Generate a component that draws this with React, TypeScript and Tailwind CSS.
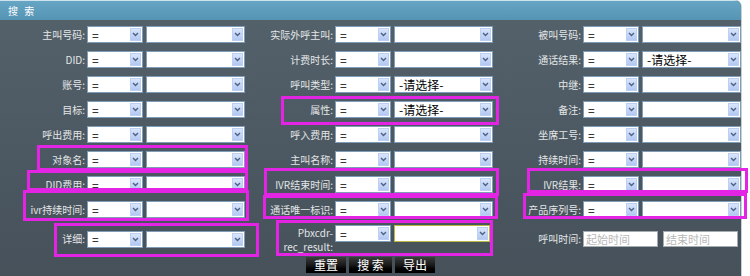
import React from "react";

const FONT = { fontFamily: '"Noto Sans CJK SC", "Liberation Sans", sans-serif' };

type Field = { label: string; value?: string; yellow?: boolean };

const rows: Field[][] = [
  [{ label: "主叫号码:" }, { label: "实际外呼主叫:" }, { label: "被叫号码:" }],
  [{ label: "DID:" }, { label: "计费时长:" }, { label: "通话结果:", value: "-请选择-" }],
  [{ label: "账号:" }, { label: "呼叫类型:", value: "-请选择-" }, { label: "中继:" }],
  [{ label: "目标:" }, { label: "属性:", value: "-请选择-" }, { label: "备注:" }],
  [{ label: "呼出费用:" }, { label: "呼入费用:" }, { label: "坐席工号:" }],
  [{ label: "对象名:" }, { label: "主叫名称:" }, { label: "持续时间:" }],
  [{ label: "DID费用:" }, { label: "IVR结束时间:" }, { label: "IVR结果:" }],
  [{ label: "ivr持续时间:" }, { label: "通话唯一标识:" }, { label: "产品序列号:" }],
];

// magenta annotation boxes drawn over the form
const marks = [
  { x: 281, y: 96, w: 218, h: 29 },
  { x: 37, y: 145, w: 211, h: 26 },
  { x: 27, y: 170, w: 221, h: 21 },
  { x: 23, y: 190, w: 226, h: 31 },
  { x: 54, y: 223, w: 205, h: 34 },
  { x: 264, y: 168, w: 235, h: 28 },
  { x: 263, y: 195, w: 235, h: 24 },
  { x: 276, y: 220, w: 217, h: 36 },
  { x: 527, y: 168, w: 221, h: 25 },
  { x: 523, y: 193, w: 224, h: 26 },
];

function Arrow() {
  return (
    <span className="absolute right-[1px] top-[1px] bottom-[1px] w-[11px] flex items-center justify-center bg-gradient-to-b from-[#d9e5fb] to-[#b3c8f2] border border-[#bccff5]">
      <svg width="7" height="5" viewBox="0 0 7 5">
        <polyline points="1,1 3.5,3.5 6,1" fill="none" stroke="#4d6185" strokeWidth="1.4" />
      </svg>
    </span>
  );
}

function Select({ w, text, yellow }: { w: string; text?: string; yellow?: boolean }) {
  return (
    <div
      className={`relative h-[17px] bg-white border ${yellow ? "border-[#b8b840]" : "border-[#7f9db9]"} ${w} flex items-center pl-[4px] text-[12px] text-black leading-none`}
    >
      {text}
      <Arrow />
    </div>
  );
}

function Cell({ f }: { f: Field }) {
  return (
    <div className="flex items-center">
      <div className="w-[87px] pr-[2px] text-right text-[10px] text-[#e4e6e8] leading-none">{f.label}</div>
      <Select w="w-[56px]" text="=" />
      <div className="w-[3px]" />
      <Select w="w-[99px]" text={f.value} yellow={f.yellow} />
    </div>
  );
}

export default function App() {
  return (
    <div className="relative w-[750px] h-[276px] bg-white overflow-hidden" style={FONT}>
      <div className="w-[742px] h-full flex flex-col rounded-tr-[7px] overflow-hidden border-r border-[#c5d0d8] bg-gradient-to-b from-[#54626b] to-[#46515a]">
        {/* header */}
        <div className="h-[20px] shrink-0 flex items-center pl-[8px] border-t border-[#cfe3ee] bg-gradient-to-b from-[#66a6c4] to-[#5594b3] text-white text-[10px] tracking-[2px]">
          搜 索
        </div>
        <div className="pt-[2px]">
          {rows.map((r, i) => (
            <div key={i} className="h-[25px] grid grid-cols-[248px_248px_246px]">
              {r.map((f) => (
                <Cell key={f.label} f={f} />
              ))}
            </div>
          ))}
          {/* last row */}
          <div className="h-[34px] grid grid-cols-[248px_248px_246px]">
            <Cell f={{ label: "详细:" }} />
            <div className="flex items-start pt-[3px]">
              <div className="w-[87px] pr-[2px] pt-[1px] text-right text-[10px] leading-[14px] text-[#e4e6e8]">
                <div>Pbxcdr-</div>
                <div>rec_result:</div>
              </div>
              <Select w="w-[56px]" text="=" />
              <div className="w-[3px]" />
              <Select w="w-[96px]" yellow />
            </div>
            <div className="flex items-center">
              <div className="w-[87px] pr-[2px] text-right text-[10px] leading-none text-[#e4e6e8]">呼叫时间:</div>
              <div className="w-[75px] h-[16px] bg-white border border-[#a5adb3] flex items-center pl-[2px] text-[11px] text-[#b8b8b8]">
                起始时间
              </div>
              <div className="w-[5px]" />
              <div className="w-[75px] h-[16px] bg-white border border-[#a5adb3] flex items-center pl-[2px] text-[11px] text-[#b8b8b8]">
                结束时间
              </div>
            </div>
          </div>
          {/* buttons */}
          <div className="mt-[1px] flex justify-center gap-[3px]">
            {["重置", "搜 索", "导出"].map((b) => (
              <button
                key={b}
                className={`${b === "搜 索" ? "w-[43px]" : "w-[40px]"} h-[16px] flex items-center justify-center bg-gradient-to-b from-[#3c3c3c] via-[#1a1a1a] to-black text-white text-[12px] leading-none`}
              >
                {b}
              </button>
            ))}
          </div>
        </div>
      </div>

      {marks.map((m, i) => (
        <div
          key={i}
          className="absolute border-[3px] border-[#e424e4] pointer-events-none"
          style={{ left: m.x, top: m.y, width: m.w, height: m.h }}
        />
      ))}
    </div>
  );
}
